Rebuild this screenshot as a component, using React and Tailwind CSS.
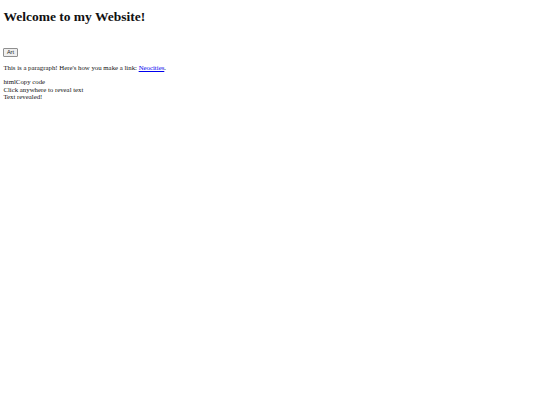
export default function App() {
  return (
    <div className="bg-white min-h-[405px] px-[3.4px] pt-[9px] font-['Liberation_Serif','Times_New_Roman',serif] text-[#111]">
      <h1 className="text-[13.5px] font-bold leading-[1.15]">Welcome to my Website!</h1>
      <div className="mt-[23.4px] leading-none flex">
        <button className="font-['Liberation_Sans',Arial,sans-serif] text-[5.6px] leading-[1.15] px-[2.5px] py-[0.4px] bg-[#efefef] border-[0.5px] border-[#8f8f8f] rounded-[1px] text-[#222]">
          Art
        </button>
      </div>
      <p className="mt-[6.7px] text-[6.8px] leading-[1.15]">
        This is a paragraph! Here's how you make a link:{" "}
        <a href="#" className="text-[#0000ee] underline">Neocities</a>.
      </p>
      <div className="mt-[6.6px] text-[6.8px] leading-[1.1]">
        <div>htmlCopy code</div>
        <div>Click anywhere to reveal text</div>
        <div>Text revealed!</div>
      </div>
    </div>
  );
}
